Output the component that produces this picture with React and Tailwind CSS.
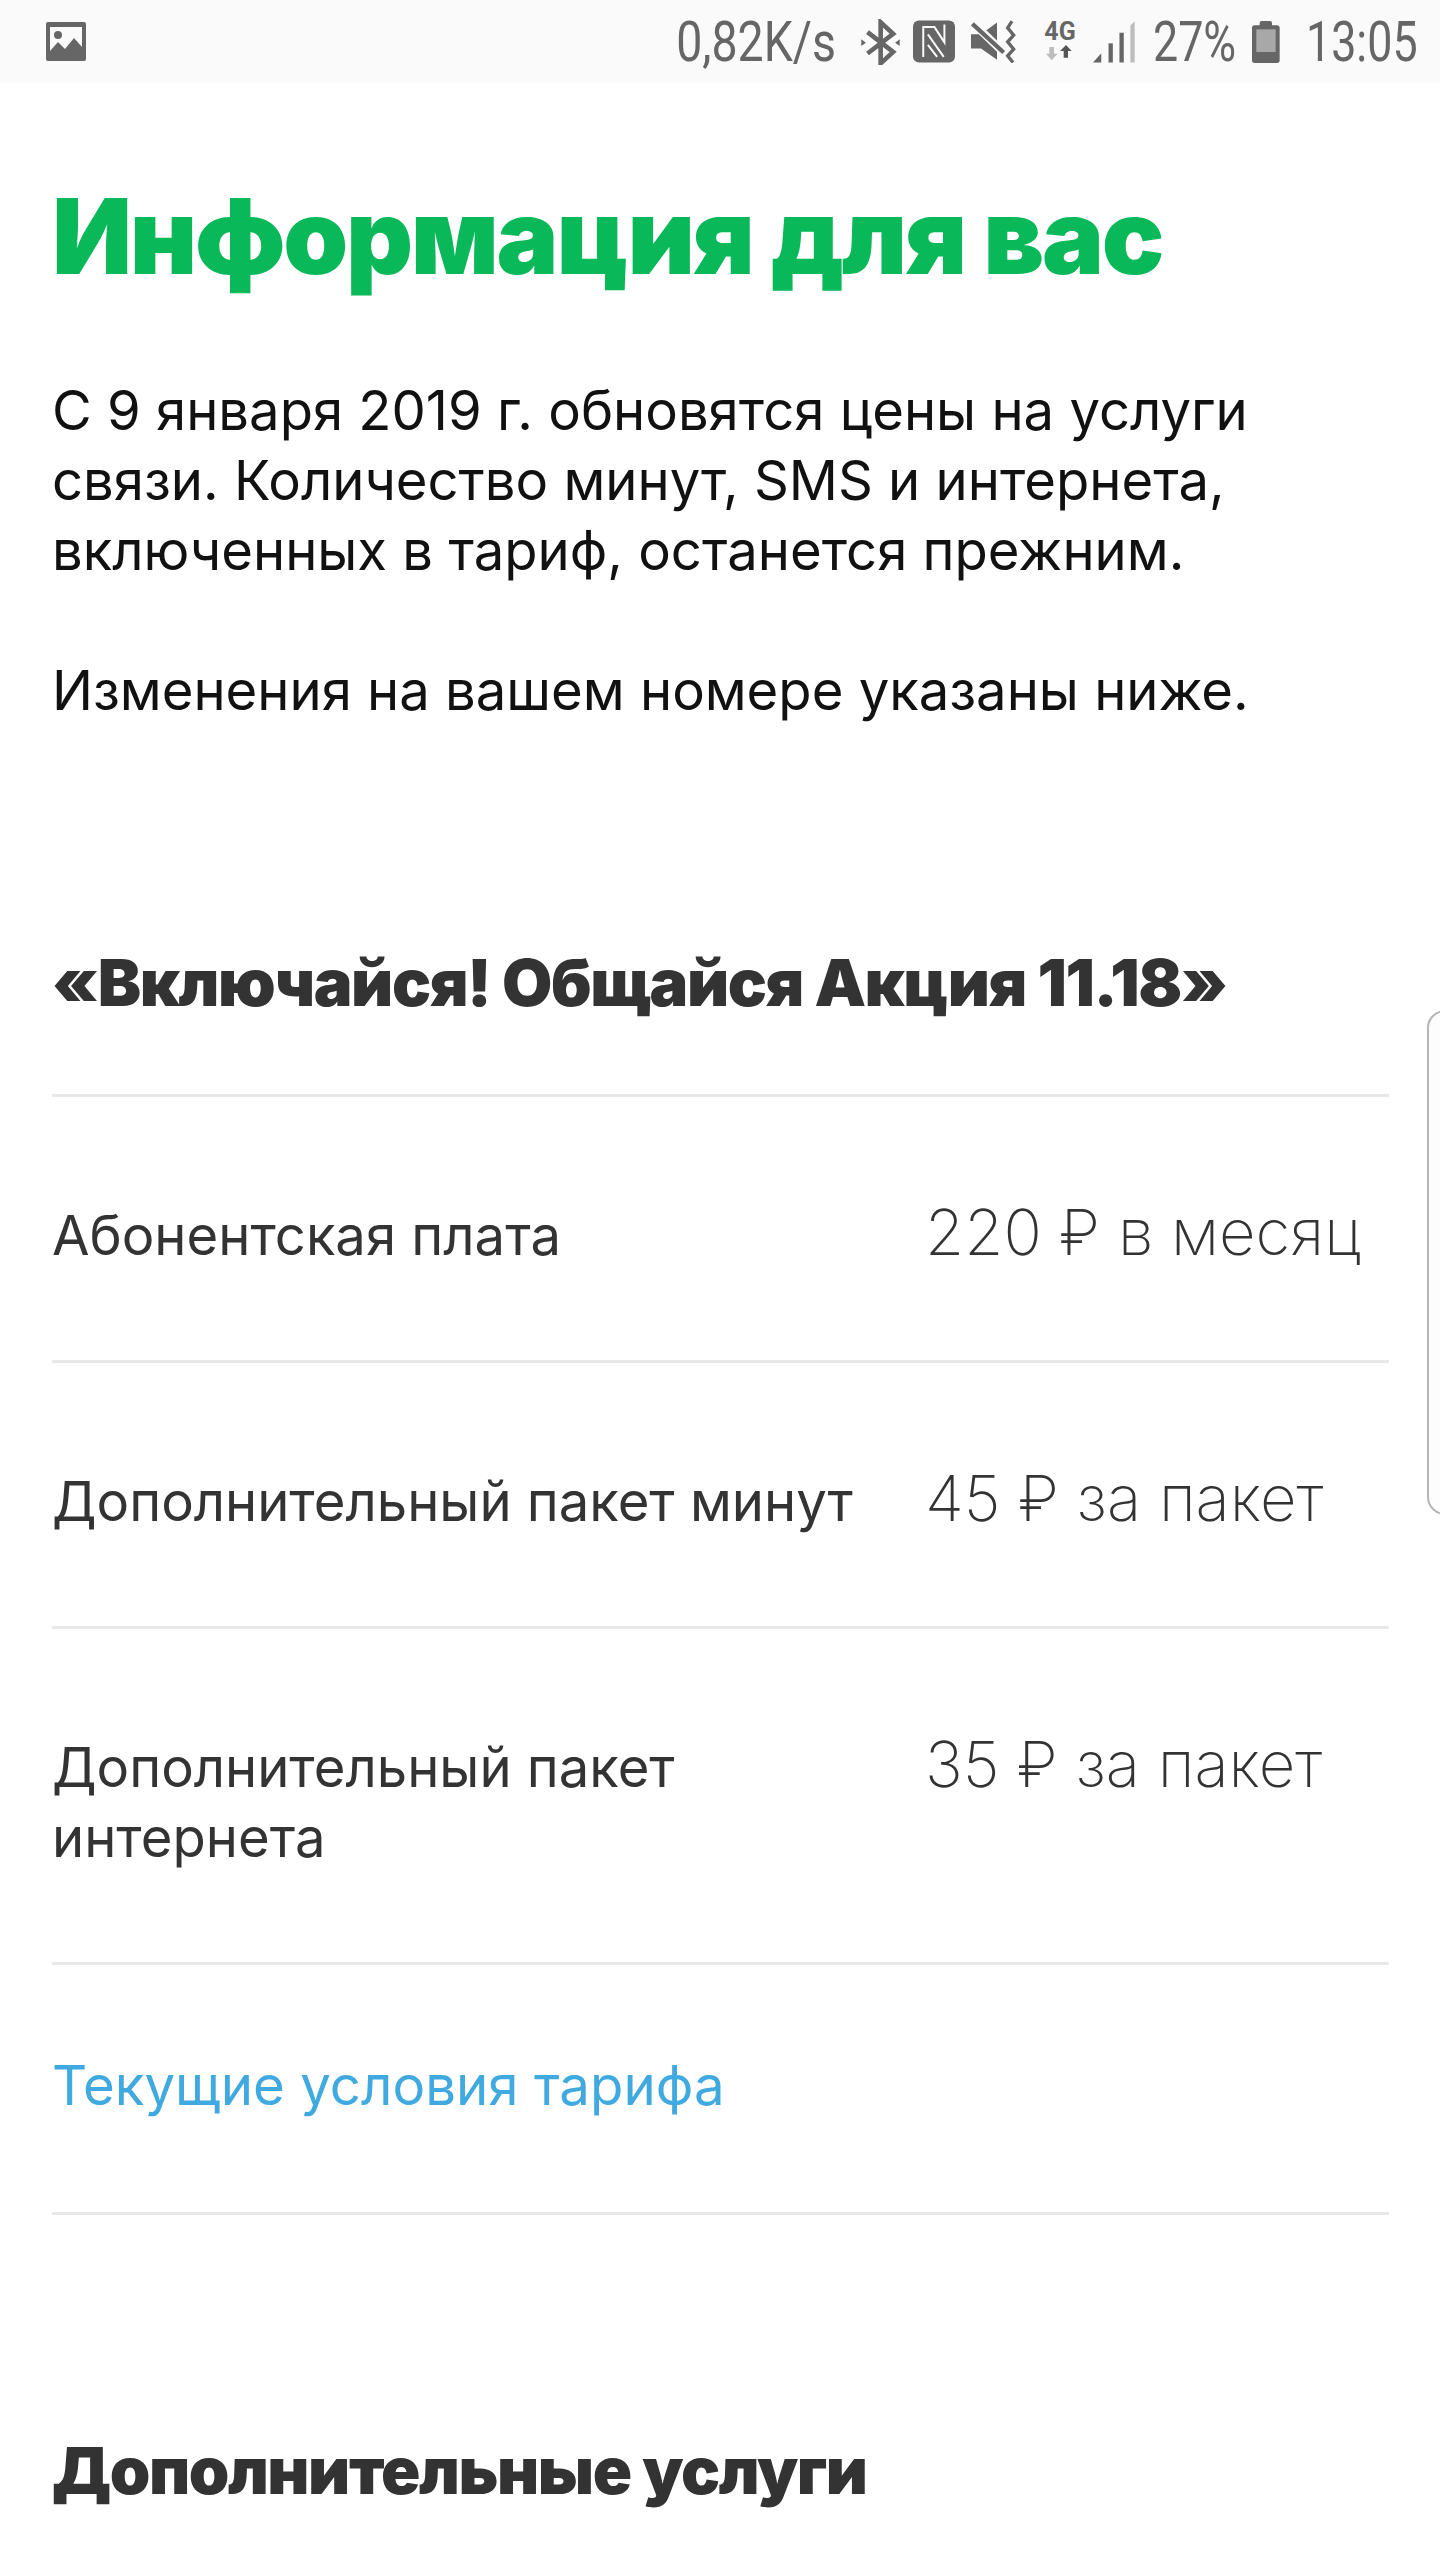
const font = { fontFamily: "Inter, 'Noto Sans', sans-serif" };

const rows = [
  { name: "Абонентская плата", price: "220 ₽ в месяц" },
  { name: "Дополнительный пакет минут", price: "45 ₽ за пакет" },
  { name: "Дополнительный пакет интернета", price: "35 ₽ за пакет" },
];

const StatusIcons = () => (
  <div className="flex items-center text-[#666666] font-['Roboto',sans-serif] text-[56px] leading-none">
    <span className="w-[156px] whitespace-nowrap scale-x-[0.83] origin-right flex justify-end">0,82K/s</span>
    {/* bluetooth */}
    <svg className="ml-[24px]" width="40" height="46" viewBox="30 25 120 140" fill="none">
      <path d="M52 65 L130 125 L92 160 V35 L130 70 L52 130" stroke="#666" strokeWidth="14" />
      <path d="M33 87 L47 97 L33 107 Z M150 87 L136 97 L150 107 Z" fill="#666" />
    </svg>
    {/* nfc */}
    <svg className="ml-[13px]" width="42" height="43" viewBox="25 18 127 127">
      <rect x="25" y="18" width="127" height="127" rx="18" fill="#666" />
      <path d="M56 128 V38 H90 L120 84 V30 M70 60 L118 128 M70 92 L98 128" fill="none" stroke="#fafafa" strokeWidth="6" />
    </svg>
    {/* mute + vibrate */}
    <svg className="ml-[16px]" width="45" height="43" viewBox="362 33 135 128">
      <path d="M362 75 H392 L440 40 V152 L392 118 H362 Z" fill="#666" />
      <path d="M366 40 L460 130" stroke="#fafafa" strokeWidth="24" />
      <path d="M366 44 L460 130" stroke="#666" strokeWidth="13" />
      <path d="M485 36 L472 56 L490 78 L472 98 L490 120 L472 140 L488 160" fill="none" stroke="#666" strokeWidth="10" />
    </svg>
    {/* 4G */}
    <div className="ml-[27px] w-[34px] flex flex-col items-center">
      <span className="text-[25px] leading-[20px] font-bold">4G</span>
      <svg className="mt-[3px]" width="28" height="16" viewBox="50 112 84 48">
        <path d="M60 118 H74 V138 H85 L67 158 L50 138 H60 Z" fill="#bdbdbd" />
        <path d="M103 150 H116 V130 H127 L110 112 L92 130 H103 Z" fill="#555" />
      </svg>
    </div>
    {/* signal */}
    <svg className="ml-[16px]" width="42" height="42" viewBox="190 33 127 126">
      <path d="M190 158 L215 130 V158 Z" fill="#666" />
      <rect x="237" y="100" width="13" height="58" fill="#666" />
      <rect x="270" y="68" width="13" height="90" fill="#666" />
      <path d="M303 46 L316 33 V158 H303 Z" fill="#bdbdbd" />
    </svg>
    <span className="ml-[18px] w-[83px] whitespace-nowrap scale-x-[0.8] origin-left">27%</span>
    {/* battery */}
    <svg className="ml-[16px]" width="28" height="42" viewBox="667 32 84 126">
      <path d="M690 38 Q690 32 696 32 H721 Q727 32 727 38 V45 H742 Q750 45 750 53 V150 Q750 158 742 158 H675 Q667 158 667 150 V53 Q667 45 675 45 H690 Z" fill="#666" />
      <rect x="680" y="57" width="58" height="68" fill="#a8a8a8" />
    </svg>
    <span className="ml-[26px] w-[112px] whitespace-nowrap scale-x-[0.8] origin-left">13:05</span>
  </div>
);

const App = () => {
  return (
    <div style={font} className="relative w-[1440px] h-[2560px] bg-white overflow-hidden">
      <div className="h-[83px] bg-[#fafafa] pl-[46px] pr-[22px] flex items-center justify-between">
        <svg width="40" height="39" viewBox="0 0 40 39">
          <rect width="40" height="39" rx="2" fill="#666" />
          <rect x="4" y="5" width="32" height="25" fill="#fafafa" />
          <circle cx="12" cy="13" r="4" fill="#666" />
          <path d="M4 29 L12 20 L19 27 L28 16 L36 25 V36 H4 Z" fill="#666" />
        </svg>
        <StatusIcons />
      </div>

      <div className="px-[52px] pt-[89px]">
        <h1 className="text-[#09b858] text-[104px] leading-[128px] font-black tracking-[-0.022em] whitespace-nowrap">Информация для вас</h1>
        <div className="mt-[75px] text-[54.4px] leading-[70px] text-[#111111]">
          <p>С 9 января 2019 г. обновятся цены на услуги<br />связи. Количество минут, SMS и интернета,<br />включенных в тариф, останется прежним.</p>
          <p className="mt-[70px]">Изменения на вашем номере указаны ниже.</p>
        </div>

        <h2 className="mt-[218px] text-[#333333] text-[65px] leading-[80px] font-black tracking-[-0.022em]">«Включайся! Общайся Акция 11.18»</h2>

        <div className="mt-[71px] w-[1337px] border-t-[3px] border-[#e8e8e8]">
          {rows.map((row, index) => (
            <div key={index} className="flex border-b-[3px] border-[#e8e8e8] pt-[103px] pb-[90px]">
              <div className="w-[873px] pr-[60px] text-[54.4px] leading-[70px] text-[#333333]">{row.name}</div>
              <div className="text-[63.5px] leading-[64px] font-[250] text-[#333333] whitespace-nowrap">{row.price}</div>
            </div>
          ))}
          <div className="h-[250px] pb-[8px] border-b-[3px] border-[#e8e8e8] flex items-center">
            <span className="text-[54.6px] leading-[70px] text-[#3fa9e0]">Текущие условия тарифа</span>
          </div>
        </div>

        <h2 className="mt-[216px] text-[#333333] text-[65px] leading-[80px] font-black tracking-[-0.022em]">Дополнительные услуги</h2>
      </div>

      <div className="absolute left-[1427px] top-[1010px] w-[40px] h-[505px] rounded-l-[18px] border-2 border-[#b5b5b5] bg-[#fdfdfd]" />
    </div>
  );
};

export default App;
